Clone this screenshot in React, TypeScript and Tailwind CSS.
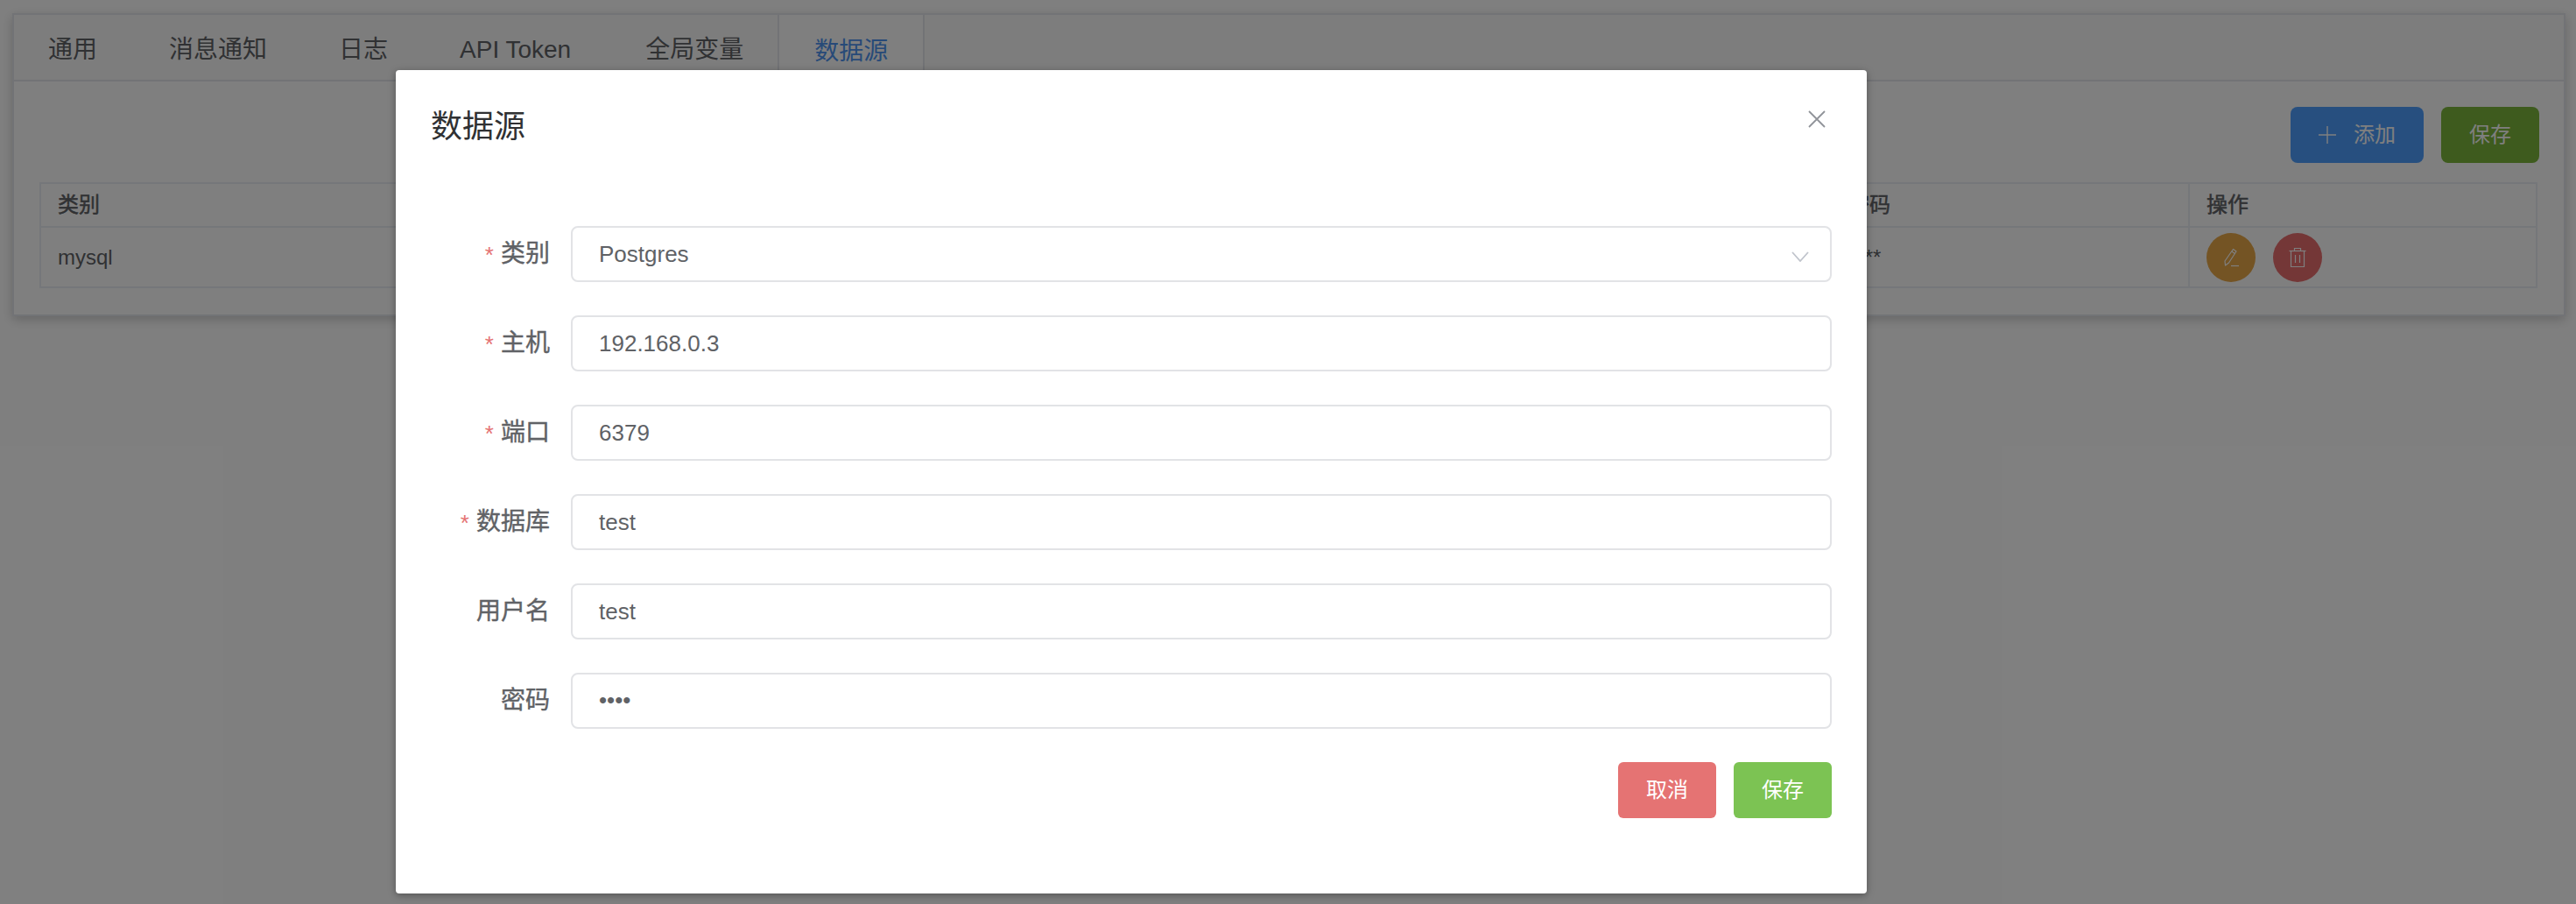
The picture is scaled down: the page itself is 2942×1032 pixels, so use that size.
import React from 'react';

const FONT = '[font-family:"Liberation_Sans","Noto_Sans_CJK_SC",sans-serif]';

const tabs = [
  { text: '通用', cls: 'pl-[39px] pr-[41px]' },
  { text: '消息通知', cls: 'px-[41px]' },
  { text: '日志', cls: 'px-[41px]' },
  { text: 'API Token', cls: 'pl-[41px] pr-[44px]' },
  { text: '全局变量', cls: 'pl-[41px] pr-[39px]' },
];
// the middle columns sit behind the dialog
const columns = ['类别', '', '', '', '', '密码'];
const row = ['mysql', '', '', '', '', '****'];

const fields = [
  { label: '主机', value: '192.168.0.3', required: true },
  { label: '端口', value: '6379', required: true },
  { label: '数据库', value: 'test', required: true },
  { label: '用户名', value: 'test', required: false },
];

function PencilIcon() {
  return (
    <svg viewBox="0 0 24 24" className="w-[24px] h-[24px]" fill="none" stroke="currentColor" strokeWidth="1.2">
      <path d="M14.5 2.5 18 5 9.5 18 5.5 21 5 16Z" strokeLinejoin="round" />
      <path d="M12.8 5 16.3 7.5" />
      <path d="M12 21.5h9" />
    </svg>
  );
}

function TrashIcon() {
  return (
    <svg viewBox="0 0 24 24" className="w-[24px] h-[24px]" fill="none" stroke="currentColor" strokeWidth="1.2">
      <path d="M2.5 4.5h19" />
      <path d="M8.5 4.5V1.5h7v3" />
      <path d="M4.5 4.5v18h15v-18" />
      <path d="M9.5 9v9M14.5 9v9" />
    </svg>
  );
}

function Label({ text, required }: { text: string; required: boolean }) {
  return (
    <div className="w-[136px] mr-[24px] shrink-0 flex justify-end items-center text-[28px] text-[#606266] [-webkit-text-stroke:0.4px_#606266]">
      {required && <span className="text-[#e57373] text-[26px] mr-[8px] mt-[2px] [-webkit-text-stroke:0]">*</span>}
      {text}
    </div>
  );
}

function FieldBox({ children }: { children: React.ReactNode }) {
  return (
    <div className="flex-1 h-[64px] border-2 border-[#e2e3e6] rounded-[8px] pl-[30px] pr-[24px] flex items-center justify-between text-[26px] text-[#606266]">
      {children}
    </div>
  );
}

export default function App() {
  return (
    <div className={`relative h-[1032px] overflow-hidden bg-white ${FONT}`}>
      {/* Settings page under the dialog */}
      <div className="pl-[14px] pt-[15px] pr-[12px]">
        <div className="h-[346px] bg-white border-2 border-[#e4e7ed] shadow-[0_4px_12px_rgba(0,0,0,0.2)]">
          <div className="h-[76px] flex bg-[#fafafa] border-b-2 border-[#e4e7ed]">
            {tabs.map((t) => (
              <div key={t.text} className={`pt-[6px] flex items-center text-[28px] text-[#606266] ${t.cls}`}>
                {t.text}
              </div>
            ))}
            <div className="px-[40px] pt-[6px] h-[78px] flex items-center text-[28px] text-[#4f94f0] bg-white border-x-2 border-[#e4e7ed]">
              数据源
            </div>
          </div>
          <div className="pl-[29px] pr-[28px]">
            <div className="h-[115px] pt-[29px] flex justify-end gap-[20px]">
              <button className="w-[152px] h-[64px] rounded-[8px] bg-[#4f9fff] text-white text-[24px] flex items-center justify-center gap-[20px]">
                <svg viewBox="0 0 20 20" className="w-[20px] h-[20px]" fill="none" stroke="currentColor" strokeWidth="1.4">
                  <path d="M10 0v20M0 10h20" />
                </svg>
                添加
              </button>
              <button className="w-[112px] h-[64px] rounded-[8px] bg-[#7cb63c] text-white text-[24px]">保存</button>
            </div>
            <table className="w-[2853px] table-fixed border-collapse text-[24px] text-[#606266]">
              <thead>
                <tr className="h-[50px]">
                  {columns.map((c, i) => (
                    <th key={i} className="w-[409px] px-[19px] border-2 border-[#ebeef5] text-left font-normal [-webkit-text-stroke:0.5px_#606266]">
                      {c}
                    </th>
                  ))}
                  <th className="px-[19px] border-2 border-[#ebeef5] text-left font-normal [-webkit-text-stroke:0.5px_#606266]">操作</th>
                </tr>
              </thead>
              <tbody>
                <tr className="h-[69px]">
                  {row.map((v, i) => (
                    <td key={i} className="px-[19px] border-2 border-[#ebeef5]">
                      {v}
                    </td>
                  ))}
                  <td className="px-[19px] border-2 border-[#ebeef5]">
                    <div className="flex gap-[20px]">
                      <button className="w-[56px] h-[56px] rounded-full bg-[#e8a848] text-white flex items-center justify-center">
                        <PencilIcon />
                      </button>
                      <button className="w-[56px] h-[56px] rounded-full bg-[#e86e6e] text-white flex items-center justify-center">
                        <TrashIcon />
                      </button>
                    </div>
                  </td>
                </tr>
              </tbody>
            </table>
          </div>
        </div>
      </div>

      {/* Dialog overlay */}
      <div className="absolute inset-0 bg-black/50 pt-[80px] pl-[452px]">
        <div className="relative w-[1680px] h-[940px] bg-white rounded-[4px] shadow-[0_2px_8px_rgba(0,0,0,0.35)] px-[40px] pt-[47px]">
          <h2 className="text-[36px] leading-[36px] text-[#303133]">数据源</h2>
          <button className="absolute top-[46px] right-[47px] text-[#909399]">
            <svg viewBox="0 0 20 20" className="w-[20px] h-[20px] block" fill="none" stroke="currentColor" strokeWidth="1.8">
              <path d="M1 1l18 18M19 1L1 19" />
            </svg>
          </button>

          <div className="mt-[95px] flex flex-col gap-[38px]">
            <div className="flex">
              <Label text="类别" required />
              <FieldBox>
                Postgres
                <svg viewBox="0 0 20 12" className="w-[20px] h-[12px] mt-[6px]" fill="none" stroke="#c0c4cc" strokeWidth="1.8">
                  <path d="M1 1l9 10 9-10" />
                </svg>
              </FieldBox>
            </div>
            {fields.map((f) => (
              <div key={f.label} className="flex">
                <Label text={f.label} required={f.required} />
                <FieldBox>{f.value}</FieldBox>
              </div>
            ))}
            <div className="flex">
              <Label text="密码" required={false} />
              <FieldBox>
                <span className="-mt-[2px]">••••</span>
              </FieldBox>
            </div>
          </div>

          <div className="mt-[38px] flex justify-end gap-[20px]">
            <button className="w-[112px] h-[64px] rounded-[6px] bg-[#e57373] text-white text-[24px]">取消</button>
            <button className="w-[112px] h-[64px] rounded-[6px] bg-[#7cc353] text-white text-[24px]">保存</button>
          </div>
        </div>
      </div>
    </div>
  );
}
